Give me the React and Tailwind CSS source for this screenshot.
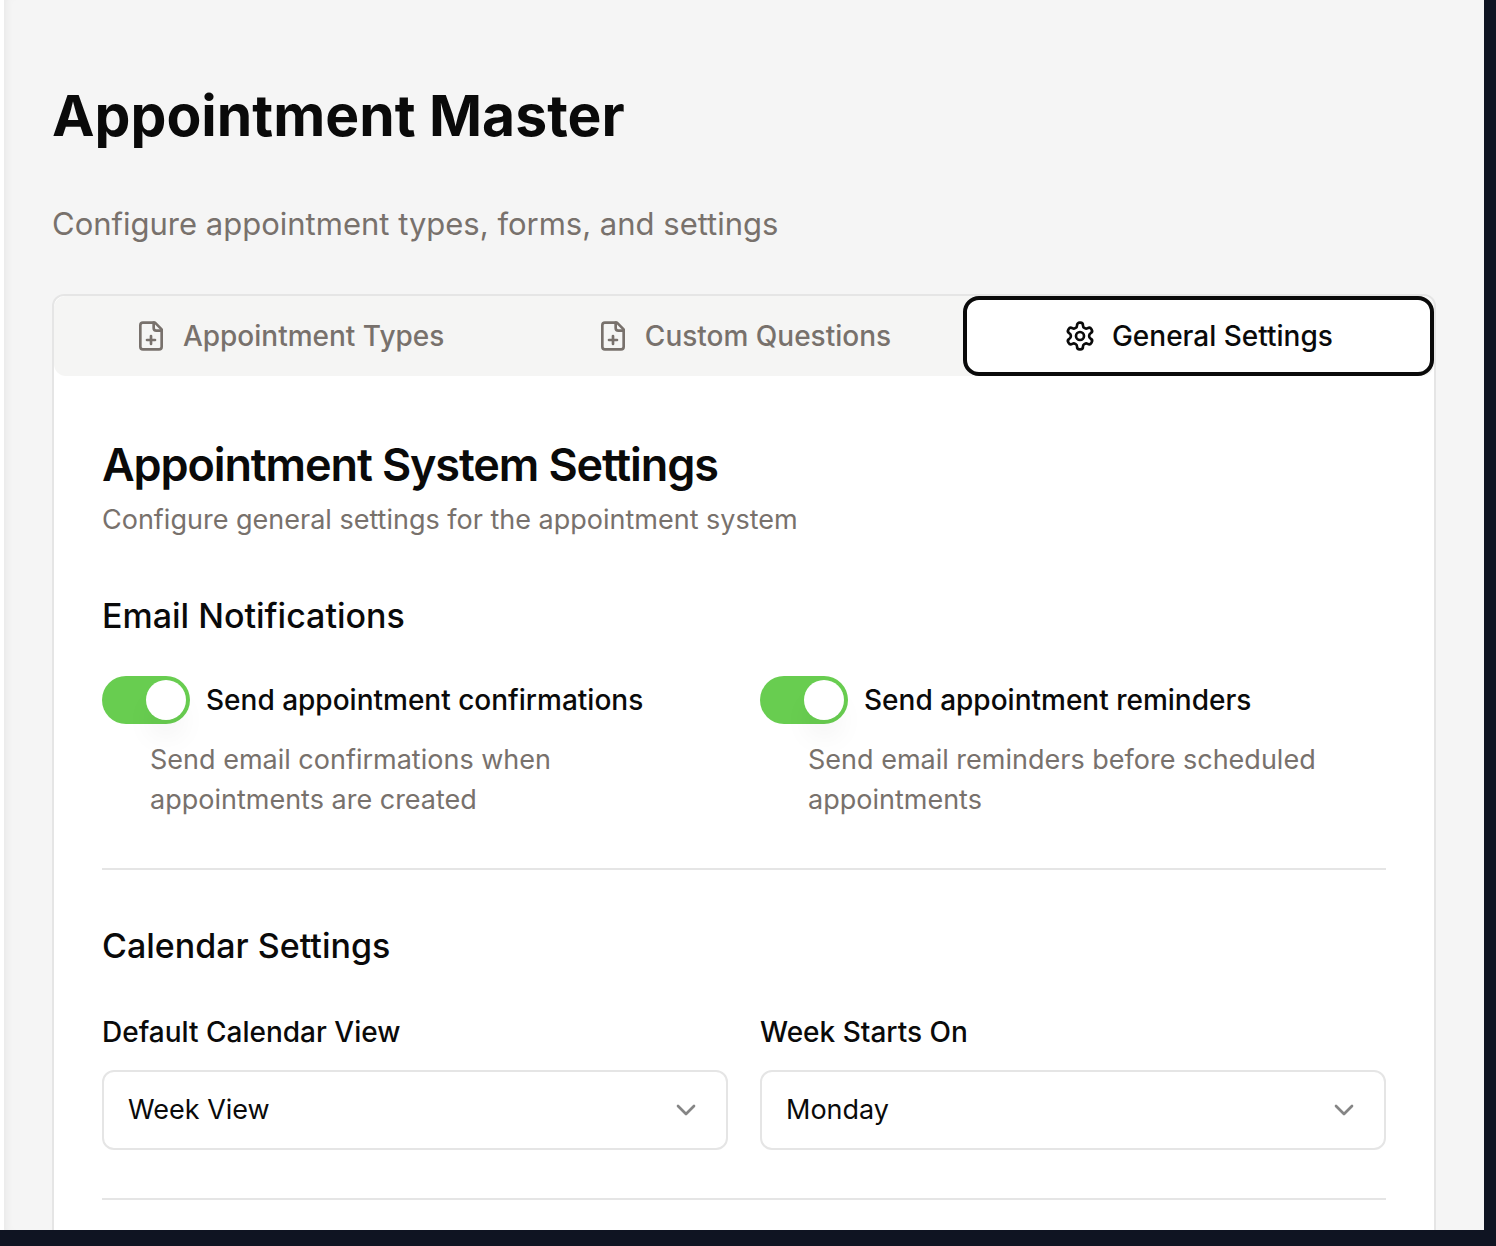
import { useState } from "react";
import { ChevronDown } from "lucide-react";

function Icon({ children }) {
  return (
    <svg className="size-8 shrink-0" viewBox="0 0 24 24" fill="none" stroke="currentColor" strokeWidth="2" strokeLinecap="round" strokeLinejoin="round" aria-hidden="true">
      {children}
    </svg>
  );
}

function FilePlus() {
  return (
    <Icon>
      <path d="M15 2H6a2 2 0 0 0-2 2v16a2 2 0 0 0 2 2h12a2 2 0 0 0 2-2V7Z" />
      <path d="M14 2v4a2 2 0 0 0 2 2h4" />
      <path d="M9 15h6" />
      <path d="M12 18v-6" />
    </Icon>
  );
}

function Gear() {
  return (
    <Icon>
      <path d="M12.22 2h-.44a2 2 0 0 0-2 2v.18a2 2 0 0 1-1 1.73l-.43.25a2 2 0 0 1-2 0l-.15-.08a2 2 0 0 0-2.73.73l-.22.38a2 2 0 0 0 .73 2.73l.15.1a2 2 0 0 1 1 1.72v.51a2 2 0 0 1-1 1.74l-.15.09a2 2 0 0 0-.73 2.73l.22.38a2 2 0 0 0 2.73.73l.15-.08a2 2 0 0 1 2 0l.43.25a2 2 0 0 1 1 1.73V20a2 2 0 0 0 2 2h.44a2 2 0 0 0 2-2v-.18a2 2 0 0 1 1-1.73l.43-.25a2 2 0 0 1 2 0l.15.08a2 2 0 0 0 2.73-.73l.22-.39a2 2 0 0 0-.73-2.73l-.15-.08a2 2 0 0 1-1-1.74v-.5a2 2 0 0 1 1-1.74l.15-.09a2 2 0 0 0 .73-2.73l-.22-.38a2 2 0 0 0-2.73-.73l-.15.08a2 2 0 0 1-2 0l-.43-.25a2 2 0 0 1-1-1.73V4a2 2 0 0 0-2-2z" />
      <circle cx="12" cy="12" r="3" />
    </Icon>
  );
}

const tabs = [
  { label: "Appointment Types", TabIcon: FilePlus },
  { label: "Custom Questions", TabIcon: FilePlus },
  { label: "General Settings", TabIcon: Gear },
];

function Toggle({ id, label, hint }) {
  const [on, setOn] = useState(true);
  return (
    <div>
      <div className="flex h-12 items-center gap-4">
        <button
          id={id}
          type="button"
          role="switch"
          aria-checked={on}
          onClick={() => setOn(!on)}
          className={`flex h-12 w-22 shrink-0 items-center rounded-full p-1 ${on ? "justify-end bg-[#68cd50]" : "justify-start bg-[#e5e5e5]"}`}
        >
          <span className="size-10 rounded-full bg-white shadow-[0_20px_30px_-6px_rgba(0,0,0,0.08)]" />
        </button>
        <label htmlFor={id} className="text-[28px] leading-7 font-medium">{label}</label>
      </div>
      <p className="mt-4 pl-12 text-[27px] leading-10 text-[#78716c]">{hint}</p>
    </div>
  );
}

function Dropdown({ id, label, options }) {
  return (
    <div>
      <label htmlFor={id} className="block text-[28px] leading-7 font-medium">{label}</label>
      <div className="relative mt-6">
        <select id={id} className="block h-20 w-full appearance-none rounded-xl border-2 border-[#e5e5e5] bg-white px-6 text-[27px]">
          {options.map((o) => <option key={o}>{o}</option>)}
        </select>
        <ChevronDown className="pointer-events-none absolute top-6 right-[26px] size-8 text-[#858585]" />
      </div>
    </div>
  );
}

export default function App() {
  const [active, setActive] = useState(2);
  return (
    <div className="h-screen overflow-hidden bg-[#0f1422] pr-3 pb-4 font-['Inter',sans-serif] text-[#0a0a0a]">
      <div className="h-full overflow-hidden border-l-4 border-white bg-[#f5f5f5] px-12 pt-20 shadow-[inset_8px_0_8px_-6px_rgba(0,0,0,0.06)]">
        <h1 className="text-[57px] leading-18 font-bold">Appointment Master</h1>
        <p className="mt-12 text-[31px] leading-12 text-[#78716c]">Configure appointment types, forms, and settings</p>
        <div className="mt-[46px] rounded-xl border-2 border-[#e5e5e5] bg-white">
          <div role="tablist" className="grid h-20 grid-cols-[14fr_13fr_14fr] rounded-xl bg-[#f5f5f4]">
            {tabs.map(({ label, TabIcon }, i) => (
              <button
                key={label}
                type="button"
                role="tab"
                aria-selected={active === i}
                onClick={() => setActive(i)}
                className={`flex items-center justify-center gap-4 rounded-2xl text-[28px] font-medium ${active === i ? "border-4 border-[#0a0a0a] bg-white" : "text-[#78716c]"}`}
              >
                <TabIcon />
                {label}
              </button>
            ))}
          </div>
          <div className="px-12 pt-16 pb-12">
            <h2 className="text-[45px] leading-[50px] font-semibold tracking-tight">Appointment System Settings</h2>
            <p className="mt-[10px] text-[27px] leading-10 text-[#78716c]">Configure general settings for the appointment system</p>
            <section className="mt-12 border-b-2 border-[#e5e5e5] pb-12">
              <h3 className="text-[34px] leading-14 font-medium">Email Notifications</h3>
              <div className="mt-8 grid grid-cols-2 gap-8">
                <Toggle id="confirmations" label="Send appointment confirmations" hint="Send email confirmations when appointments are created" />
                <Toggle id="reminders" label="Send appointment reminders" hint="Send email reminders before scheduled appointments" />
              </div>
            </section>
            <section className="mt-12 border-b-2 border-[#e5e5e5] pb-12">
              <h3 className="text-[34px] leading-14 font-medium">Calendar Settings</h3>
              <div className="mt-11 grid grid-cols-2 gap-8">
                <Dropdown id="view" label="Default Calendar View" options={["Week View", "Day View", "Month View"]} />
                <Dropdown id="week" label="Week Starts On" options={["Monday", "Sunday"]} />
              </div>
            </section>
          </div>
        </div>
      </div>
    </div>
  );
}
